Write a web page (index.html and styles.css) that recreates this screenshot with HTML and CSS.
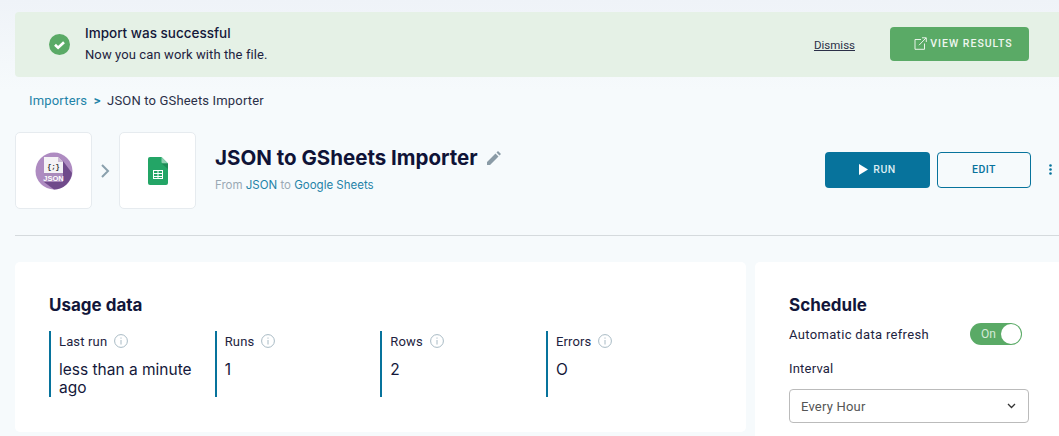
FILE: index.html
```html
<!DOCTYPE html>
<html lang="en">
<head>
<meta charset="utf-8">
<title>JSON to GSheets Importer</title>
<link rel="stylesheet" href="styles.css">
</head>
<body>
<main class="page">
  <section class="banner">
    <svg class="check" viewBox="0 0 21 21" width="21" height="21"><circle cx="10.5" cy="10.5" r="10.5" fill="#5aaa66"/><path d="M6 10.8l3.1 3 5.9-5.6" fill="none" stroke="#fff" stroke-width="2.6"/></svg>
    <div class="banner-text">
      <div class="banner-title">Import was successful</div>
      <div class="banner-sub">Now you can work with the file.</div>
    </div>
    <a class="dismiss">Dismiss</a>
    <button class="btn-results">
      <svg viewBox="0 0 13 13" width="13" height="13" fill="none" stroke="#e8f3e9" stroke-width="1"><path d="M7 2.5H1v9.8h9.5V6.5"/><path d="M5 8.2 12 1M8 .8h4.300v4.200"/></svg>
      VIEW RESULTS
    </button>
  </section>

  <nav class="crumbs"><a>Importers</a><span class="sep">&gt;</span><span>JSON to GSheets Importer</span></nav>

  <header class="head">
    <div class="tile">
      <svg viewBox="0 0 38 38" width="38" height="38">
        <circle cx="19" cy="19" r="18.500" fill="#ae8bc1"/>
        <path d="M28 9 37 21A18.500 18.500 0 0 1 19 37.500L9 30z" fill="#6f4a8a"/>
        <path d="M9 5h14l5 5v20H9z" fill="#f4f2f5"/>
        <path d="M9 21h19v9H9z" fill="#a98abb"/>
        <path d="M23 5l5 5h-5z" fill="#cbbcd4"/>
        <text x="18.500" y="16.500" class="braces">{;}</text>
        <text x="18.500" y="28.500" class="json">JSON</text>
      </svg>
    </div>
    <svg class="arrow" viewBox="0 0 9 14" width="9" height="14"><path d="M1 1l6 6-6 6" fill="none" stroke="#8aa0ad" stroke-width="2"/></svg>
    <div class="tile">
      <svg viewBox="0 0 20 28" width="20" height="28">
        <path d="M2 0h11.500L20 6.500V26a2 2 0 0 1-2 2H2a2 2 0 0 1-2-2V2a2 2 0 0 1 2-2z" fill="#23a566"/>
        <path d="M13.500 0 20 6.500h-5a1.500 1.500 0 0 1-1.500-1.500z" fill="#8ed1b1"/>
        <path d="M13.500 6.500 20 12V6.500z" fill="#1c8a55"/>
        <path d="M5 13h10v9H5z" fill="#fff"/>
        <path d="M6 16h3.500v-2H6zM10.500 16H14v-2h-3.500zM6 19h3.500v-2H6zM10.500 19H14v-2h-3.500zM6 21h3.500v-1H6zM10.500 21H14v-1h-3.500z" fill="#23a566"/>
      </svg>
    </div>
    <div class="title-block">
      <div class="title-row">
        <h1>JSON to GSheets Importer</h1>
        <svg viewBox="0 0 14 14" width="14" height="14"><path d="M0 14v-3L8.500 2.500l3 3L3 14zM9.500 1.500 11 0l3 3-1.500 1.500z" fill="#8a9ba6"/></svg>
      </div>
      <p class="from">From <a>JSON</a> to <a>Google Sheets</a></p>
    </div>
    <div class="actions">
      <button class="btn-run"><svg viewBox="0 0 9 11" width="9" height="11"><path d="M0 0l9 5.500L0 11z" fill="#fff"/></svg>RUN</button>
      <button class="btn-edit">EDIT</button>
      <svg class="more" viewBox="0 0 3 11" width="3" height="11"><circle cx="1.500" cy="1.500" r="1.300"/><circle cx="1.500" cy="5.500" r="1.300"/><circle cx="1.500" cy="9.500" r="1.300"/></svg>
    </div>
  </header>

  <hr class="rule">

  <div class="cards">
    <section class="card usage">
      <h2>Usage data</h2>
      <div class="stats">
        <div class="stat"><div class="stat-label">Last run <svg class="info" viewBox="0 0 14 14" width="14" height="14"><circle cx="7" cy="7" r="6.400"/><path d="M7 6v4.500M7 3.500v1.200"/></svg></div><div class="stat-value">less than a minute ago</div></div>
        <div class="stat"><div class="stat-label">Runs <svg class="info" viewBox="0 0 14 14" width="14" height="14"><circle cx="7" cy="7" r="6.400"/><path d="M7 6v4.500M7 3.500v1.200"/></svg></div><div class="stat-value">1</div></div>
        <div class="stat"><div class="stat-label">Rows <svg class="info" viewBox="0 0 14 14" width="14" height="14"><circle cx="7" cy="7" r="6.400"/><path d="M7 6v4.500M7 3.500v1.200"/></svg></div><div class="stat-value">2</div></div>
        <div class="stat"><div class="stat-label">Errors <svg class="info" viewBox="0 0 14 14" width="14" height="14"><circle cx="7" cy="7" r="6.400"/><path d="M7 6v4.500M7 3.500v1.200"/></svg></div><div class="stat-value">O</div></div>
      </div>
    </section>
    <section class="card schedule">
      <h2>Schedule</h2>
      <div class="refresh"><span>Automatic data refresh</span><span class="toggle"><span class="toggle-on">On</span><span class="knob"></span></span></div>
      <div class="interval-label">Interval</div>
      <div class="select"><span>Every Hour</span><svg viewBox="0 0 9 6" width="9" height="6"><path d="M1 1l3.500 3.500L8 1" fill="none" stroke="#333" stroke-width="1.300"/></svg></div>
    </section>
  </div>
</main>
</body>
</html>
```
FILE: styles.css
```css
* { box-sizing: border-box; }
html, body { margin: 0; height: 436px; overflow: hidden; }
body {
  width: 1059px;
  background: linear-gradient(#eff3f8 0, #f6fafc 90px, #f6fafc 100%);
  font-family: "Roboto", "Liberation Sans", sans-serif;
  color: #1d2340;
}
.page { padding: 12px 0 0 15px; }
a { color: #1f83a8; }

.banner {
  display: flex;
  align-items: center;
  height: 65px;
  padding: 0 30px 0 34px;
  background: #e5f1e6;
  border-radius: 4px 0 0 4px;
}
.check { flex: none; margin-right: 15px; }
.banner-text { flex: 1; }
.banner-title { font: 500 13.500px/20px "Inter", sans-serif; color: #14183a; margin-top: -1px; }
.banner-sub { font-size: 13px; line-height: 20px; margin-top: 2px; letter-spacing: .1px; }
.dismiss { font-size: 11.500px; color: #2b3048; text-decoration: underline; margin-right: 35px; }
.btn-results {
  display: flex; align-items: center; justify-content: center; gap: 3px;
  width: 139px; height: 34px; margin-bottom: 2px; padding: 0 0 0 8px;
  border: 0; border-radius: 4px;
  background: #5aaa66; color: #eef6ef;
  font: 500 10.500px "Roboto", sans-serif; letter-spacing: 1px;
}

.crumbs { display: flex; gap: 6.500px; align-items: center; margin: 15px 0 0 14px; height: 16px; font-size: 13px; letter-spacing: .17px; color: #2b3048; }
.sep { color: #1f83a8; font-weight: 700; }

.head { display: flex; align-items: center; margin-top: 24px; height: 77px; }
.tile {
  display: flex; align-items: center; justify-content: center;
  width: 77px; height: 77px;
  background: #fff; border: 1px solid #e6ebef; border-radius: 5px;
}
.arrow { margin: 0 9px; }
.braces { font: 700 7px "Liberation Mono", monospace; fill: #333; text-anchor: middle; }
.json { font: 700 7.500px "Liberation Sans", sans-serif; fill: #fff; text-anchor: middle; }
.title-block { margin-left: 19px; flex: 1; padding-bottom: 5px; }
.title-row { display: flex; align-items: center; gap: 9px; }
h1 { margin: 0; font: 700 20.500px/28px "Inter", sans-serif; color: #0f1337; }
.from { margin: 5px 0 0; font: 400 11.500px/16px "Inter", sans-serif; color: #9aa9b4; }
.actions { display: flex; align-items: center; margin-bottom: 2px; }
.btn-run {
  display: flex; align-items: center; justify-content: center; gap: 5px;
  width: 105px; height: 36px; border: 0; border-radius: 4px;
  background: #07739c; color: #dcedf3;
  font: 500 10.500px "Roboto", sans-serif; letter-spacing: .5px;
}
.btn-edit {
  width: 94px; height: 36px; margin-left: 7px;
  background: transparent; border: 1px solid #07739c; border-radius: 4px;
  color: #07739c; font: 500 10.500px "Roboto", sans-serif; letter-spacing: .5px;
}
.more { margin: 0 7px 0 18px; fill: #07739c; }

.rule { margin: 26px 0 0; border: 0; border-top: 1px solid #d5dadd; }

.cards { display: flex; gap: 9px; margin-top: 26px; }
.card { background: #fff; border-radius: 5px; padding: 33px 34px 0; }
.usage { width: 731px; height: 170px; flex: none; }
.schedule { flex: 1; height: 174px; border-radius: 5px 0 0 0; }
h2 { margin: 0; font: 700 17px/20px "Inter", sans-serif; color: #12163a; }

.stats { display: grid; grid-template-columns: repeat(4, 165.670px); margin-top: 16px; }
.stat { height: 66px; border-left: 2px solid #07739c; padding-left: 8px; }
.stat-label { display: flex; align-items: center; gap: 7px; height: 16px; margin-top: 2px; font-size: 13px; letter-spacing: .15px; }
.info { fill: none; stroke: #a8bac4; stroke-width: 1; }
.stat-value { width: 145px; margin-top: 12px; font: 400 15.500px/18px "Inter", sans-serif; color: #14183a; }

.refresh { display: flex; align-items: center; justify-content: space-between; width: 233px; margin-top: 8px; font-size: 13px; letter-spacing: .33px; height: 22px; }
.toggle { position: relative; display: block; width: 52px; height: 22px; background: #5aaa66; border-radius: 11px; letter-spacing: 0; }
.toggle-on { position: absolute; left: 11px; top: 4px; font-size: 12px; color: #d6ead9; }
.knob { position: absolute; right: 1px; top: 1px; width: 20px; height: 20px; background: #fff; border-radius: 50%; }
.interval-label { margin-top: 16px; font-size: 13px; line-height: 16px; letter-spacing: .2px; }
.select {
  display: flex; align-items: center; justify-content: space-between;
  width: 240px; height: 34px; margin-top: 12px; padding: 0 12px 0 11px;
  border: 1px solid #bbb; border-radius: 4px;
  font-size: 13px; letter-spacing: .2px; color: #555;
}
```
